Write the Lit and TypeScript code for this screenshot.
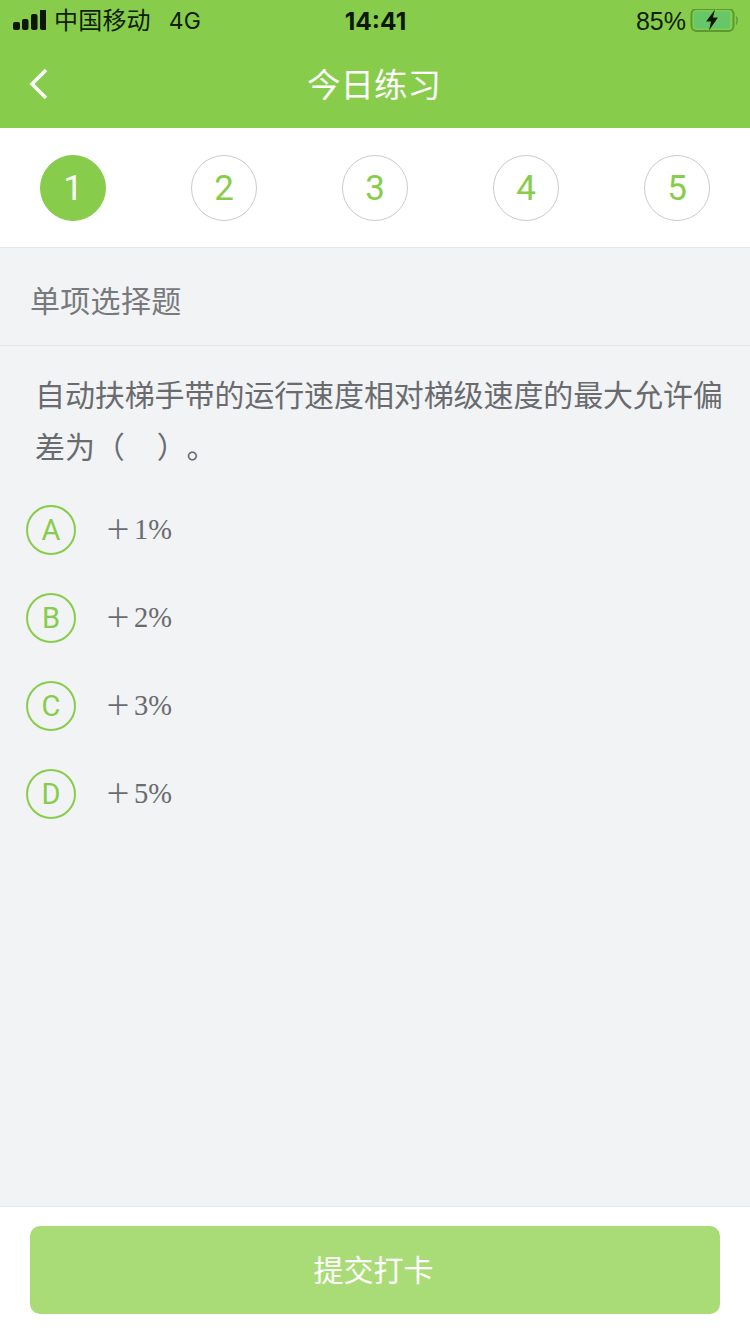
import { LitElement, html, css } from 'lit';
import { customElement } from 'lit/decorators.js';

const STEPS = ['1', '2', '3', '4', '5'];
const OPTIONS = [
  { key: 'A', text: '1%' },
  { key: 'B', text: '2%' },
  { key: 'C', text: '3%' },
  { key: 'D', text: '5%' },
];

@customElement('app-root')
export class AppRoot extends LitElement {
  static styles = css`
    :host {
      display: flex;
      flex-direction: column;
      width: 750px;
      height: 1334px;
      overflow: hidden;
      background: #f2f3f5;
      font-family: "Inter", "Noto Sans CJK SC", sans-serif;
    }
    .head {
      background: #87cd4b;
      height: 128px;
      flex: none;
    }
    .status {
      height: 42px;
      display: grid;
      grid-template-columns: 1fr auto 1fr;
      align-items: center;
      color: #10200a;
      font-size: 24px;
      padding: 0 12px 0 13px;
    }
    .status-left, .status-right {
      display: flex;
      align-items: center;
    }
    .status-right {
      justify-content: flex-end;
      gap: 4px;
      font-family: "Liberation Sans", sans-serif;
      font-size: 25px;
    }
    .carrier {
      margin-left: 8px;
      font-size: 24px;
      line-height: 24px;
      letter-spacing: 0.2px;
    }
    .net {
      margin-left: 18px;
      font-size: 23px;
    }
    .time {
      font-weight: 700;
      font-size: 24.500px;
      color: #0c1708;
    }
    .nav {
      height: 86px;
      display: flex;
      align-items: center;
      justify-content: center;
      position: relative;
      padding: 0 2px 6px 0;
      box-sizing: border-box;
      color: #fff;
      font-size: 33.500px;
    }
    .back {
      position: absolute;
      left: 28px;
      top: 26px;
    }
    .steps {
      flex: none;
      height: 120px;
      background: #fff;
      border-bottom: 1px solid #e4e5e7;
      display: flex;
      justify-content: space-between;
      align-items: flex-start;
      padding: 27px 40px 0;
      box-sizing: border-box;
    }
    .step {
      width: 66px;
      height: 66px;
      border-radius: 50%;
      border: 1px solid #c9cbcc;
      box-sizing: border-box;
      display: flex;
      align-items: center;
      justify-content: center;
      color: #87cd4b;
      font-family: "Roboto", sans-serif;
      font-size: 35px;
      font-weight: 400;
    }
    .step.on {
      background: #87cd4b;
      border-color: #87cd4b;
      color: #fff;
    }
    .kind {
      flex: none;
      height: 98px;
      padding-left: 30px;
      padding-top: 4px;
      box-sizing: border-box;
      border-bottom: 1px solid #e4e5e7;
      display: flex;
      align-items: center;
      color: #77797c;
      font-size: 30px;
      letter-spacing: 0.3px;
    }
    .question {
      margin: 0;
      padding: 23px 20px 0 35px;
      color: #696b6f;
      font-size: 30px;
      line-height: 52px;
      letter-spacing: -0.1px;
      text-spacing-trim: space-all;
    }
    .gap {
      display: inline-block;
      width: 32px;
    }
    .options {
      flex: 1;
      display: flex;
      flex-direction: column;
      padding: 13px 0 0 26px;
    }
    .option {
      height: 88px;
      display: flex;
      align-items: center;
      flex: none;
    }
    .mark {
      width: 50px;
      height: 50px;
      border-radius: 50%;
      border: 2px solid #87cd4b;
      box-sizing: border-box;
      display: flex;
      align-items: center;
      justify-content: center;
      color: #87cd4b;
      font-family: "Roboto", sans-serif;
      font-size: 29px;
      font-weight: 400;
    }
    .value {
      margin-left: 29px;
      display: flex;
      align-items: center;
      color: #696b6f;
      font-family: "Liberation Serif", serif;
      font-size: 28.500px;
    }
    .plus {
      width: 29px;
      padding-bottom: 5px;
      font-family: "Noto Sans CJK SC", sans-serif;
      font-weight: 400;
      font-size: 26px;
    }
    .foot {
      flex: none;
      height: 128px;
      background: #fff;
      border-top: 1px solid #e6e7e9;
      box-sizing: border-box;
      padding: 19px 30px 0;
    }
    .submit {
      height: 88px;
      border-radius: 10px;
      background: #a9dc76;
      color: #fff;
      font-size: 30px;
      display: flex;
      align-items: center;
      justify-content: center;
      padding: 0 3px 4px 0;
      box-sizing: border-box;
    }
  `;

  render() {
    return html`
      <div class="head">
        <div class="status">
          <div class="status-left">
            <svg width="33" height="22" viewBox="0 1 33 22">
              <rect x="0" y="13" width="7" height="8" rx="2" fill="#0c1708"></rect>
              <rect x="9" y="10" width="6.500" height="11" rx="2" fill="#0c1708"></rect>
              <rect x="18" y="5" width="6.500" height="16" rx="2" fill="#0c1708"></rect>
              <rect x="27" y="0" width="6.500" height="21" rx="2" fill="#0c1708"></rect>
            </svg>
            <span class="carrier">中国移动</span>
            <span class="net">4G</span>
          </div>
          <div class="time">14:41</div>
          <div class="status-right">
            <span>85%</span>
            <svg width="48" height="24" viewBox="0 1.500 48 24">
              <rect x="1.500" y="1.500" width="42" height="22" rx="5" fill="none" stroke="#5a9a35" stroke-width="2"></rect>
              <rect x="4" y="4" width="36" height="17" rx="2" fill="#66c76a"></rect>
              <path d="M46 9c1.500 1 1.500 7 0 8" fill="none" stroke="#5a9a35" stroke-width="1.500"></path>
              <path d="M25 2 L16 14 H21 L19 23 L28 10 H23 Z" fill="#0c1708" stroke="#87cd4b" stroke-width="1" paint-order="stroke"></path>
            </svg>
          </div>
        </div>
        <div class="nav">
          <svg class="back" width="22" height="32" viewBox="0 0 22 32">
            <path d="M18 2 L4 16 L18 30" fill="none" stroke="#fff" stroke-width="3.500"></path>
          </svg>
          今日练习
        </div>
      </div>
      <div class="steps">
        ${STEPS.map((s, i) => html`<div class="step ${i === 0 ? 'on' : ''}">${s}</div>`)}
      </div>
      <div class="kind">单项选择题</div>
      <p class="question">自动扶梯手带的运行速度相对梯级速度的最大允许偏差为（<span class="gap"></span>）。</p>
      <div class="options">
        ${OPTIONS.map(o => html`
          <div class="option">
            <div class="mark">${o.key}</div>
            <div class="value"><span class="plus">＋</span>${o.text}</div>
          </div>
        `)}
      </div>
      <div class="foot">
        <div class="submit">提交打卡</div>
      </div>
    `;
  }
}
